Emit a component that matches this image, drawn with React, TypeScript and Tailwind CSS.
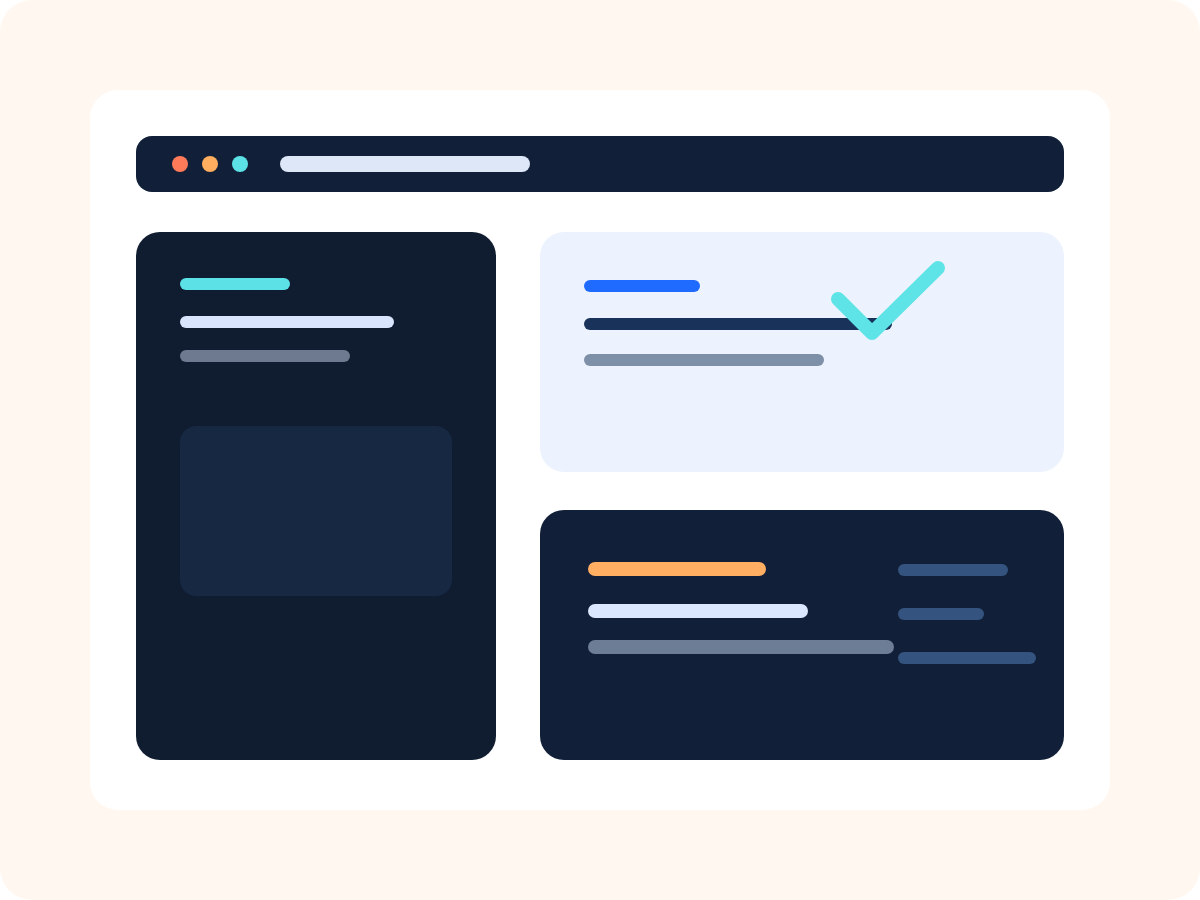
export default function App() {
  return (
    <div className="w-[1200px] h-[900px] bg-white">
      <div className="w-full h-full bg-[#fff7f0] rounded-[32px] p-[90px]">
        <div className="w-full h-full bg-white rounded-[28px] p-[46px] flex flex-col">
          <div className="h-[56px] bg-[#112038] rounded-[16px] flex items-center pl-[36px]">
            <div className="w-[16px] h-[16px] rounded-full bg-[#ff7a59]" />
            <div className="w-[16px] h-[16px] rounded-full bg-[#ffad5e] ml-[14px]" />
            <div className="w-[16px] h-[16px] rounded-full bg-[#5ce1e6] ml-[14px]" />
            <div className="w-[250px] h-[16px] rounded-full bg-[#dde7f7] ml-[32px]" />
          </div>
          <div className="mt-[40px] flex gap-[44px]">
            <div className="w-[360px] h-[528px] bg-[#101c2f] rounded-[24px] pl-[44px] pt-[46px] flex flex-col items-start">
              <div className="w-[110px] h-[12px] rounded-full bg-[#5ce1e6]" />
              <div className="w-[214px] h-[12px] rounded-full bg-[#d9e5fc] mt-[26px]" />
              <div className="w-[170px] h-[12px] rounded-full bg-[#6e7a8f] mt-[22px]" />
              <div className="w-[272px] h-[170px] rounded-[16px] bg-[#172842] mt-[64px]" />
            </div>
            <div className="w-[524px] flex flex-col gap-[38px]">
              <div className="relative h-[240px] bg-[#edf3fe] rounded-[24px] pl-[44px] pt-[48px] flex flex-col items-start">
                <div className="w-[116px] h-[12px] rounded-full bg-[#1f6bff]" />
                <div className="w-[308px] h-[12px] rounded-full bg-[#18325a] mt-[26px]" />
                <div className="w-[240px] h-[12px] rounded-full bg-[#7e8fa8] mt-[24px]" />
                <svg className="absolute left-0 top-0" width="524" height="240" viewBox="0 0 524 240">
                  <path d="M298 67 L332 101 L398 36" fill="none" stroke="#5ee4e6" strokeWidth="14" strokeLinecap="round" strokeLinejoin="round" />
                </svg>
              </div>
              <div className="h-[250px] bg-[#111f38] rounded-[24px] pl-[48px] pt-[52px] flex items-start gap-[4px]">
                <div className="flex flex-col items-start w-[306px]">
                  <div className="w-[178px] h-[14px] rounded-full bg-[#ffae62]" />
                  <div className="w-[220px] h-[14px] rounded-full bg-[#dbe6ff] mt-[28px]" />
                  <div className="w-[306px] h-[14px] rounded-full bg-[#6e7d96] mt-[22px]" />
                </div>
                <div className="flex flex-col items-start mt-[2px]">
                  <div className="w-[110px] h-[12px] rounded-full bg-[#34547f]" />
                  <div className="w-[86px] h-[12px] rounded-full bg-[#34547f] mt-[32px]" />
                  <div className="w-[138px] h-[12px] rounded-full bg-[#34547f] mt-[32px]" />
                </div>
              </div>
            </div>
          </div>
        </div>
      </div>
    </div>
  );
}
